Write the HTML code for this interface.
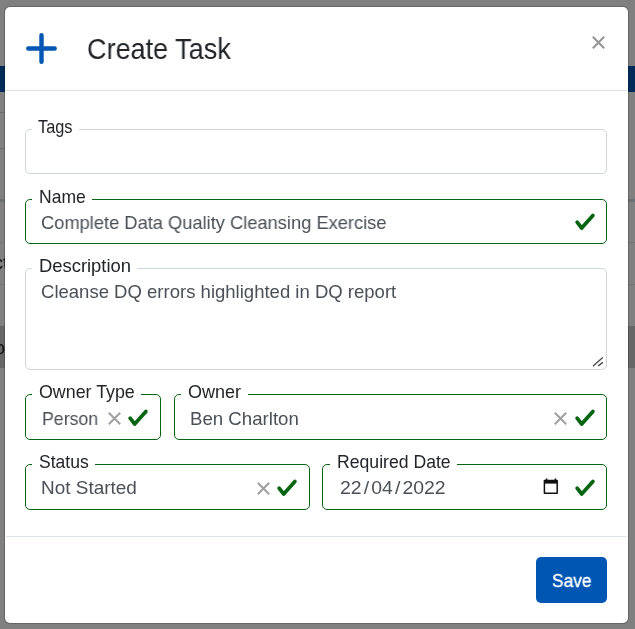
<!DOCTYPE html>
<html lang="en">
<head>
<meta charset="utf-8">
<title>Create Task</title>
<style>
*{box-sizing:border-box;margin:0;padding:0}
html,body{width:635px;height:629px;overflow:hidden;background:#808080}
body{position:relative;background:#808080;font-family:"Liberation Sans",sans-serif;color:#212529}
/* dimmed page behind the modal */
.bgbar{position:absolute;left:0;top:66px;width:635px;height:26px;background:#002b59}
.bgline{position:absolute;left:0;width:635px;height:1px;background:#696c70}
.bgblock{position:absolute;left:0;width:635px;background:#676767}
.bgtxt{position:absolute;color:#0c0d0e;font-size:18px;line-height:1;white-space:nowrap;will-change:transform}
/* modal */
.modal{position:absolute;left:4px;top:6px;width:625px;height:618px;background:#fff;background-clip:padding-box;border:1px solid rgba(0,0,0,.2);border-radius:6px}
.hline{position:absolute;height:1px;background:#dee2e6}
.t{position:absolute;white-space:nowrap;line-height:1;transform-origin:0 0}
.title{font-size:29px;font-weight:400;color:#212529;will-change:transform}
.fs{position:absolute;border:1px solid #ced4da;border-radius:5px;background:#fff}
.fs.ok{border-color:#066511}
.lg{position:absolute;background:#fff;height:3px;top:-1px}
.leg{font-size:18px;color:#212529}
.val{font-size:19px;color:#495057;will-change:transform}
.sl{margin:0 2px}
.btn{position:absolute;left:536px;top:557px;width:71px;height:46px;background:#0056b3;border:0;border-radius:5px;font:inherit;text-align:left}
.btn .t{color:#fff;font-size:19px;-webkit-text-stroke:0.35px #fff;will-change:transform}
svg{position:absolute;overflow:visible}
</style>
</head>
<body>
<!-- background page (dimmed) -->
<div class="bgbar"></div>
<div class="bgline" style="top:112px;width:5px"></div>
<div class="bgline" style="top:148px;width:5px"></div>
<div class="bgline" style="top:199px;height:3px;background:#6d7073"></div>
<div class="bgline" style="top:242px;background:#727476"></div>
<div class="bgline" style="top:284px;background:#727476"></div>
<div class="bgblock" style="top:326px;height:42px"></div>
<div class="bgtxt" style="left:-48.3px;top:254px">Project</div>
<div class="bgtxt" style="left:-24.9px;top:339px">Info</div>

<!-- modal dialog -->
<div class="modal"></div>

<!-- header -->
<svg style="left:26px;top:33px" width="31" height="31" viewBox="0 0 31 31"><path d="M15.5 2.3V28.7M2.3 15.5H28.7" stroke="#0056b3" stroke-width="4.4" stroke-linecap="round" fill="none"/></svg>
<h4 class="t title" id="t_title" style="left:87.4px;top:34px;font-size:30.0px;transform:scaleX(0.9016)">Create Task</h4>
<svg style="left:592.2px;top:35.7px" width="13" height="13" viewBox="0 0 13 13"><path d="M0.8 0.8L12.2 12.2M12.2 0.8L0.8 12.2" stroke="#959595" stroke-width="2.1" fill="none"/></svg>
<div class="hline" style="left:6px;top:90px;width:621px"></div>

<!-- Tags -->
<div class="fs" style="left:25px;top:129px;width:582px;height:45px"><div class="lg" style="left:6px;width:47px"></div></div>
<label class="t leg" id="t_tags" style="left:37.89px;top:119px;font-size:17.7px;transform:scaleX(0.9228)">Tags</label>

<!-- Name -->
<div class="fs ok" style="left:25px;top:199px;width:582px;height:45px"><div class="lg" style="left:6px;width:60px"></div></div>
<label class="t leg" id="t_name" style="left:39.1px;top:189px;font-size:17.7px;transform:scaleX(0.9901)">Name</label>
<div class="t val" id="v_name" style="left:40.86px;top:214px;font-size:18.5px;transform:scaleX(0.9883)">Complete Data Quality Cleansing Exercise</div>
<svg class="chk" style="left:575px;top:213px" width="20" height="17" viewBox="0 0 20 17"><path d="M2.1 9.1L6.7 15L17.9 2.5" stroke="#066511" stroke-width="3.7" stroke-linecap="round" stroke-linejoin="round" fill="none"/></svg>

<!-- Description -->
<div class="fs" style="left:25px;top:268px;width:582px;height:102px"><div class="lg" style="left:6px;width:105px"></div></div>
<label class="t leg" id="t_desc" style="left:39.08px;top:258px;font-size:17.7px;transform:scaleX(1.0397)">Description</label>
<div class="t val" id="v_desc" style="left:40.84px;top:283px;font-size:18.5px;transform:scaleX(1.0014)">Cleanse DQ errors highlighted in DQ report</div>
<svg style="left:592px;top:356px" width="12" height="12" viewBox="0 0 12 12"><path d="M1.4 9.8L10.5 1.7M6.6 9.6L10.5 6.6" stroke="#4d4d4d" stroke-width="1.35" stroke-linecap="round" fill="none"/></svg>

<!-- Owner Type -->
<div class="fs ok" style="left:25px;top:394px;width:136px;height:46px"><div class="lg" style="left:6px;width:109px"></div></div>
<label class="t leg" id="t_otype" style="left:39.45px;top:384px;font-size:17.7px;transform:scaleX(1.0077)">Owner Type</label>
<div class="t val" id="v_otype" style="left:41.6px;top:410px;font-size:18.5px;transform:scaleX(0.9582)">Person</div>
<svg style="left:108px;top:412px" width="13" height="13" viewBox="0 0 13 13"><path d="M0.8 0.8L12.2 12.2M12.2 0.8L0.8 12.2" stroke="#a0a0a0" stroke-width="2" fill="none"/></svg>
<svg class="chk" style="left:128px;top:409px" width="20" height="17" viewBox="0 0 20 17"><path d="M2.1 9.1L6.7 15L17.9 2.5" stroke="#066511" stroke-width="3.7" stroke-linecap="round" stroke-linejoin="round" fill="none"/></svg>

<!-- Owner -->
<div class="fs ok" style="left:174px;top:394px;width:433px;height:46px"><div class="lg" style="left:6px;width:67px"></div></div>
<label class="t leg" id="t_owner" style="left:187.87px;top:384px;font-size:17.7px;transform:scaleX(1.0167)">Owner</label>
<div class="t val" id="v_owner" style="left:189.54px;top:410px;font-size:18.5px;transform:scaleX(1.008)">Ben Charlton</div>
<svg style="left:554px;top:412px" width="13" height="13" viewBox="0 0 13 13"><path d="M0.8 0.8L12.2 12.2M12.2 0.8L0.8 12.2" stroke="#a0a0a0" stroke-width="2" fill="none"/></svg>
<svg class="chk" style="left:575px;top:409px" width="20" height="17" viewBox="0 0 20 17"><path d="M2.1 9.1L6.7 15L17.9 2.5" stroke="#066511" stroke-width="3.7" stroke-linecap="round" stroke-linejoin="round" fill="none"/></svg>

<!-- Status -->
<div class="fs ok" style="left:25px;top:464px;width:285px;height:46px"><div class="lg" style="left:6px;width:63px"></div></div>
<label class="t leg" id="t_status" style="left:39.35px;top:454px;font-size:17.7px;transform:scaleX(0.9904)">Status</label>
<div class="t val" id="v_status" style="left:41.08px;top:479px;font-size:18.5px;transform:scaleX(1.0246)">Not Started</div>
<svg style="left:257px;top:482px" width="13" height="13" viewBox="0 0 13 13"><path d="M0.8 0.8L12.2 12.2M12.2 0.8L0.8 12.2" stroke="#a0a0a0" stroke-width="2" fill="none"/></svg>
<svg class="chk" style="left:277px;top:479px" width="20" height="17" viewBox="0 0 20 17"><path d="M2.1 9.1L6.7 15L17.9 2.5" stroke="#066511" stroke-width="3.7" stroke-linecap="round" stroke-linejoin="round" fill="none"/></svg>

<!-- Required Date -->
<div class="fs ok" style="left:322px;top:464px;width:285px;height:46px"><div class="lg" style="left:7px;width:127px"></div></div>
<label class="t leg" id="t_rdate" style="left:336.6px;top:454px;font-size:17.7px;transform:scaleX(0.9965)">Required Date</label>
<div class="t val" id="v_rdate" style="left:339.81px;top:479px;font-size:18.5px;transform:scaleX(1.0504)">22<span class="sl">/</span>04<span class="sl">/</span>2022</div>
<svg style="left:543.2px;top:478.3px" width="16" height="16" viewBox="0 0 16 16"><path d="M1.4 2.4H14.2V15.2H1.4Z" stroke="#111" stroke-width="1.5" fill="none" stroke-linejoin="round"/><path d="M1.4 2.4H14.2V5.6H1.4Z" fill="#111"/><path d="M3.6 0.6V2.4M12.4 0.6V2.4" stroke="#111" stroke-width="1.6" fill="none"/></svg>
<svg class="chk" style="left:575px;top:479px" width="20" height="17" viewBox="0 0 20 17"><path d="M2.1 9.1L6.7 15L17.9 2.5" stroke="#066511" stroke-width="3.7" stroke-linecap="round" stroke-linejoin="round" fill="none"/></svg>

<!-- footer -->
<div class="hline" style="left:6px;top:536px;width:621px"></div>
<button type="button" class="btn"><span class="t" id="t_save" style="left:15.88px;top:15px;font-size:18.6px;transform:scaleX(0.9332)">Save</span></button>
</body>
</html>
